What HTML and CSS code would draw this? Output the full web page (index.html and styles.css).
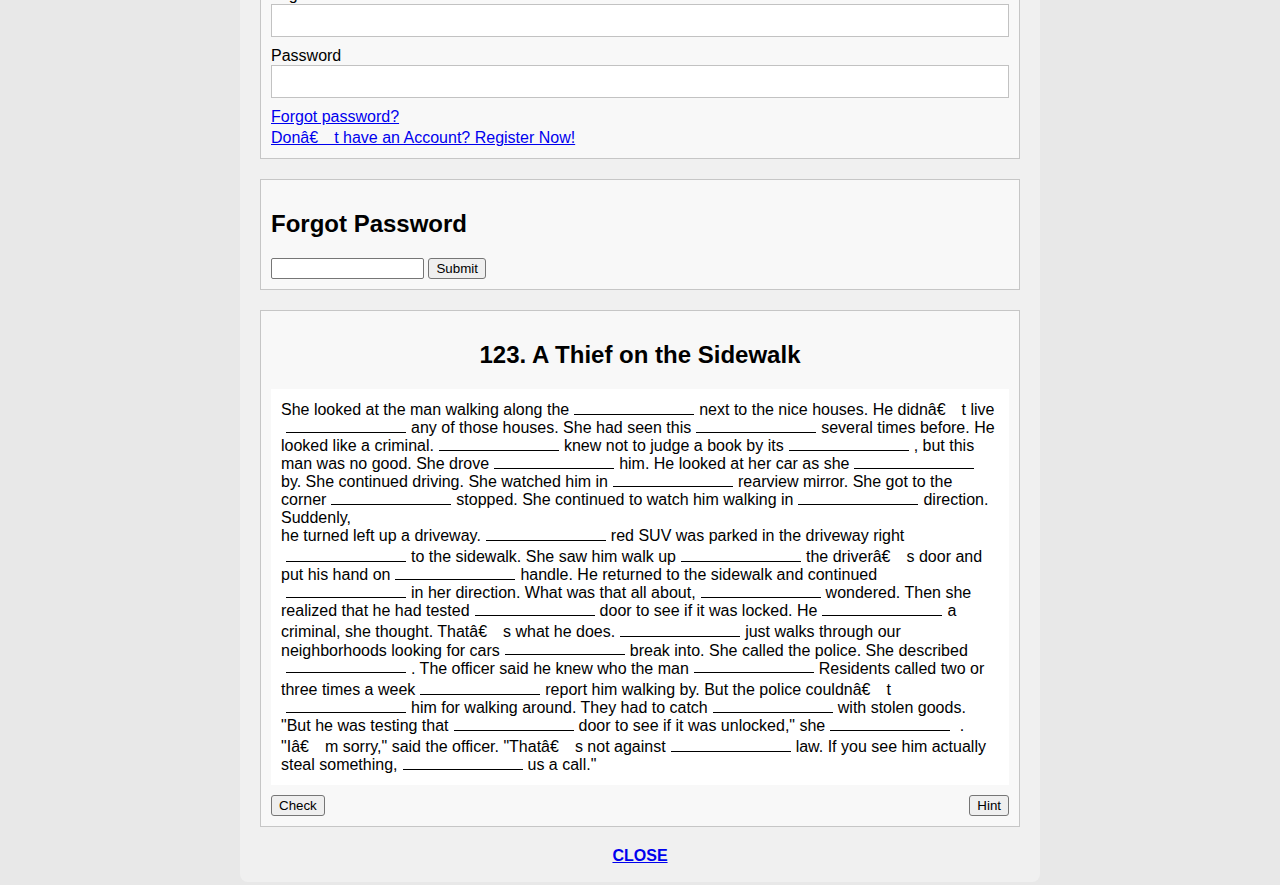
FILE: index.html
```html
<!DOCTYPE html>
<html lang="en">
<head>
<meta charset="utf-8">
<title>A Thief on the Sidewalk</title>
<link rel="stylesheet" href="styles.css">
</head>
<body>
<div class="modal">
  <div class="panel login">
    <h2 class="panel-title">Login</h2>
    <label class="field-label" for="login">Login</label>
    <input class="field" id="login" type="text">
    <label class="field-label" for="password">Password</label>
    <input class="field" id="password" type="password">
    <div class="links">
      <a href="#">Forgot password?</a>
      <a href="#">Donâ€&#8195;t have an Account? Register Now!</a>
    </div>
  </div>

  <div class="panel forgot">
    <h2 class="panel-title">Forgot Password</h2>
    <form class="forgot-form"><input class="small-input" type="text"> <button class="btn" type="button">Submit</button></form>
  </div>

  <div class="panel exercise">
    <h2 class="panel-title center">123. A Thief on the Sidewalk</h2>
    <div class="story">She looked at the man walking along the<input class="blank">next to the nice houses. He didnâ€<span class="ctl"></span>t live<input class="blank">any of those houses. She had seen this<input class="blank">several times before. He looked like a criminal.<input class="blank">knew not to judge a book by its<input class="blank">, but this man was no good. She drove<input class="blank">him. He looked at her car as she<input class="blank">by. She continued driving. She watched him in<input class="blank">rearview mirror. She got to the corner<input class="blank">stopped. She continued to watch him walking in<input class="blank">direction. Suddenly,<br>he turned left up a driveway.<input class="blank">red SUV was parked in the driveway right<input class="blank">to the sidewalk. She saw him walk up<input class="blank">the driverâ€<span class="ctl"></span>s door and put his hand on<input class="blank">handle. He returned to the sidewalk and continued<input class="blank">in her direction. What was that all about,<input class="blank">wondered. Then she realized that he had tested<input class="blank">door to see if it was locked. He<input class="blank">a criminal, she thought. Thatâ€<span class="ctl"></span>s what he does.<input class="blank">just walks through our neighborhoods looking for cars<input class="blank">break into. She called the police. She described<input class="blank">. The officer said he knew who the man<input class="blank">Residents called two or three times a week<input class="blank">report him walking by. But the police couldnâ€<span class="ctl"></span>t<input class="blank">him for walking around. They had to catch<input class="blank">with stolen goods.<br>"But he was testing that<input class="blank">door to see if it was unlocked," she<input class="blank"> .<br>"Iâ€<span class="ctl"></span>m sorry," said the officer. "Thatâ€<span class="ctl"></span>s not against<input class="blank">law. If you see him actually steal something,<input class="blank">us a call."</div>
    <div class="actions">
      <button class="btn" type="button">Check</button>
      <button class="btn" type="button">Hint</button>
    </div>
  </div>

  <div class="close-row"><a class="close-link" href="#">CLOSE</a></div>
</div>
</body>
</html>
```
FILE: styles.css
```css
html {
  overflow: hidden;
  background: #e8e8e8;
}
body {
  margin: 0;
  background: #e8e8e8;
  font-family: "Liberation Sans", Arial, Helvetica, sans-serif;
  font-size: 16px;
  color: #000;
}
.modal {
  width: 760px;
  margin: -113px auto 3px;
  padding: 0 20px;
  background: #f0f0f0;
  border-radius: 8px;
}
.panel {
  margin-top: 20px;
  padding: 10px;
  background: #f8f8f8;
  border: 1px solid #c6c6c6;
}
.panel-title {
  margin: 20px 0;
  font-size: 24px;
  font-weight: bold;
}
.center {
  text-align: center;
}
.field-label {
  display: block;
}
.field {
  display: block;
  box-sizing: border-box;
  width: 100%;
  height: 33px;
  margin: 0 0 10px;
  padding: 6px;
  border: 1px solid #c2c2c2;
  background: #fff;
  font: 16px "Liberation Sans", Arial, sans-serif;
}
.links {
  margin-top: -2px;
}
.links a {
  display: block;
  line-height: 21px;
  color: #0000ee;
}
.forgot-form {
  margin: 0;
  font-size: 16px;
}
.small-input {
  box-sizing: border-box;
  width: 153px;
  height: 21px;
  padding: 1px 2px;
  border: 1px solid #767676;
  border-radius: 2px;
  background: #fff;
  font: 13.33px "Liberation Sans", Arial, sans-serif;
  vertical-align: bottom;
}
.btn {
  box-sizing: border-box;
  height: 21px;
  padding: 1px 7px;
  border: 1px solid #767676;
  border-radius: 3px;
  background: #efefef;
  color: #000;
  font: 13.33px "Liberation Sans", Arial, sans-serif;
  vertical-align: bottom;
}
.story {
  padding: 9px 10px 11px;
  background: #fff;
  line-height: 18px;
}
.blank {
  box-sizing: border-box;
  width: 120px;
  height: 8px;
  margin: 0 5px;
  padding: 0;
  border: 0;
  border-bottom: 1px solid #000;
  background: transparent;
  vertical-align: middle;
}
.ctl {
  display: inline-block;
  width: 16px;
  height: 17.2px;
}
.actions {
  display: flex;
  justify-content: space-between;
  margin-top: 10px;
}
.close-row {
  padding: 20px 0 17px;
  text-align: center;
}
.close-link {
  color: #0000ee;
  font-weight: bold;
}
```
